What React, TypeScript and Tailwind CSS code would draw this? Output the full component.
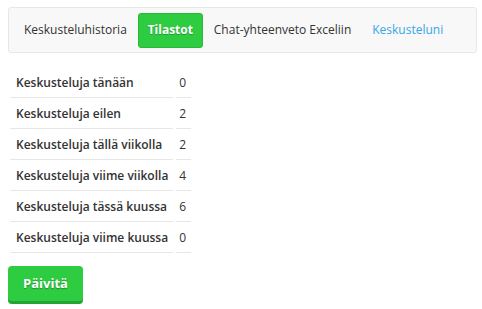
import React from "react";

const rows: [string, number][] = [
  ["Keskusteluja tänään", 0],
  ["Keskusteluja eilen", 2],
  ["Keskusteluja tällä viikolla", 2],
  ["Keskusteluja viime viikolla", 4],
  ["Keskusteluja tässä kuussa", 6],
  ["Keskusteluja viime kuussa", 0],
];

export default function App() {
  return (
    <div className="w-[482px] h-[309px] bg-white text-[#333] text-[12px] whitespace-nowrap" style={{ fontFamily: '"Open Sans", sans-serif' }}>
      <div className="pt-[7px] pl-2 pr-[5px]">
        <div className="flex items-center h-[46px] bg-[#f8f8f8] border border-[#e7e7e7] rounded-[3px] pl-[15px]">
          <span className="text-[#333]">Keskusteluhistoria</span>
          <span className="ml-[11px] h-[35px] w-[65px] justify-center flex items-center bg-[#2ecc40] border border-[#29b83a] rounded-[3px] text-white font-bold [text-shadow:0_1px_1px_rgba(0,0,0,0.25)]">Tilastot</span>
          <span className="ml-[11px]">Chat-yhteenveto Exceliin</span>
          <span className="ml-[21px] text-[#35a7e8]">Keskusteluni</span>
        </div>
      </div>
      <table className="ml-[7px] mt-[14px] border-separate border-spacing-x-[3px] border-spacing-y-[2px]">
        <tbody>
          {rows.map(([label, v]) => (
            <tr key={label}>
              <td className="h-[29px] pl-[6px] pr-[5px] font-semibold border-b border-[#e6e6e6] align-middle">{label}</td>
              <td className="h-[29px] pl-[3px] pr-[5px] border-b border-[#e6e6e6] align-middle">{v}</td>
            </tr>
          ))}
        </tbody>
      </table>
      <button className="ml-2 mt-[11px] w-[75px] h-[35px] bg-[#2ecc40] rounded-[4px] text-white font-bold text-[13px] shadow-[0_3px_0_#25a533] [text-shadow:0_1px_1px_rgba(0,0,0,0.3)]">Päivitä</button>
    </div>
  );
}
